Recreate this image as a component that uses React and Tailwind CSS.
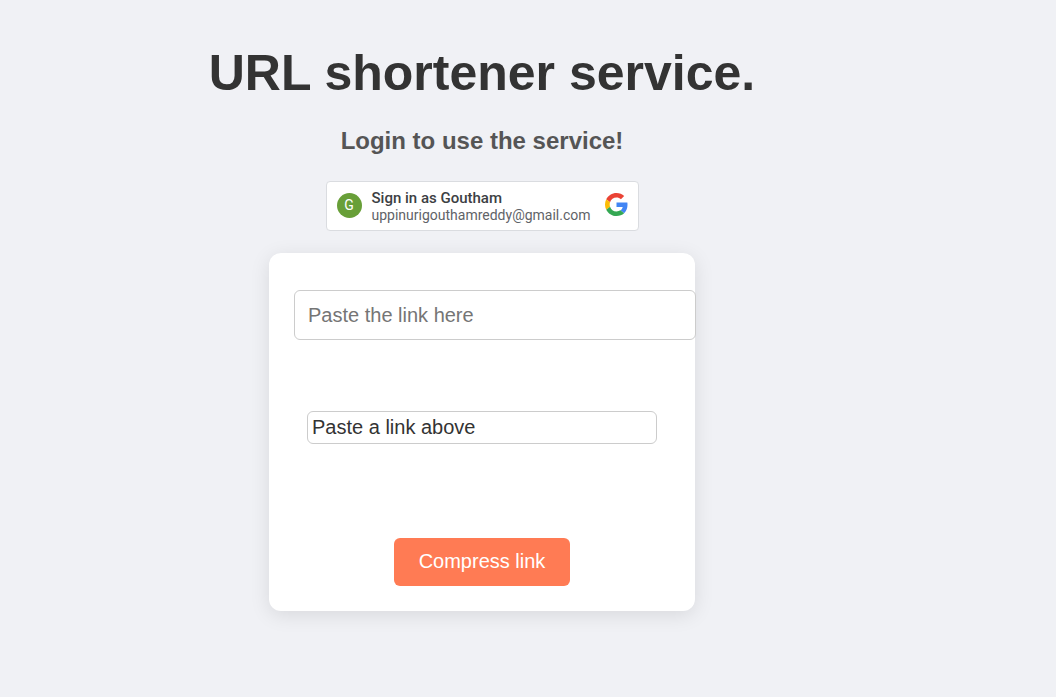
import React from "react";

function GoogleLogo() {
  return (
    <svg className="h-[23px] w-[23px] shrink-0" viewBox="0 0 48 48" aria-hidden="true">
      <path fill="#EA4335" d="M24 9.5c3.54 0 6.71 1.22 9.21 3.6l6.85-6.85C35.9 2.38 30.47 0 24 0 14.62 0 6.51 5.38 2.56 13.22l7.98 6.19C12.43 13.72 17.74 9.5 24 9.5z" />
      <path fill="#4285F4" d="M46.98 24.55c0-1.57-.15-3.09-.38-4.55H24v9.02h12.94c-.58 2.96-2.26 5.48-4.78 7.18l7.73 6c4.51-4.18 7.09-10.36 7.09-17.65z" />
      <path fill="#FBBC05" d="M10.53 28.59c-.48-1.45-.76-2.99-.76-4.59s.27-3.14.76-4.59l-7.98-6.19C.92 16.46 0 20.12 0 24c0 3.88.92 7.54 2.56 10.78l7.97-6.19z" />
      <path fill="#34A853" d="M24 48c6.48 0 11.93-2.13 15.89-5.81l-7.73-6c-2.15 1.45-4.92 2.3-8.16 2.3-6.26 0-11.57-4.22-13.47-9.91l-7.98 6.19C6.51 42.62 14.62 48 24 48z" />
    </svg>
  );
}

function SignInButton() {
  return (
    <button
      type="button"
      className="flex h-[50px] w-[313px] items-start rounded-[4px] border border-[#dadce0] bg-white px-[10px] pt-[11px] text-left font-[Roboto,sans-serif] text-[14px] leading-[17px]"
    >
      <span className="flex h-[25px] w-[25px] shrink-0 items-center justify-center rounded-full bg-[#689f38] text-white">
        G
      </span>
      <span className="-mt-[3px] ml-[10px] grow whitespace-nowrap">
        <span className="block text-[15px] font-medium text-[#3c4043]">Sign in as Goutham</span>
        <span className="block text-[#5f6368]">uppinurigouthamreddy@gmail.com</span>
      </span>
      <GoogleLogo />
    </button>
  );
}

export default function App() {
  return (
    <div className="flex min-h-screen flex-col items-center bg-[#f0f1f5] pt-11 pr-[92px] pb-10 font-['Liberation_Sans',Arial,sans-serif]">
      <h1 className="text-[50px] leading-[58px] font-bold text-[#333333]">URL shortener service.</h1>
      <h2 className="mt-[25px] mb-[26px] text-2xl leading-7 font-bold text-[#555555]">Login to use the service!</h2>
      <SignInButton />
      <form
        onSubmit={(event) => event.preventDefault()}
        className="mt-[22px] flex w-full max-w-[426px] flex-col items-center rounded-xl bg-white px-[25px] pt-[37px] pb-[25px] text-xl shadow-[0_4px_20px_rgba(0,0,0,0.1)]"
      >
        <input
          type="text"
          aria-label="Link to shorten"
          placeholder="Paste the link here"
          className="h-[50px] w-[calc(100%+26px)] shrink-0 self-start rounded-md border border-[#cccccc] bg-white px-[13px] text-[#333333] placeholder:text-[#757575]"
        />
        <output className="mt-[71px] h-[33px] w-full max-w-[350px] rounded-md border border-[#cccccc] px-1 leading-[31px] text-[#333333]">
          Paste a link above
        </output>
        <button type="submit" className="mt-[94px] h-12 rounded-md bg-[#ff7b54] px-[25px] pb-[2px] text-white">
          Compress link
        </button>
      </form>
    </div>
  );
}
